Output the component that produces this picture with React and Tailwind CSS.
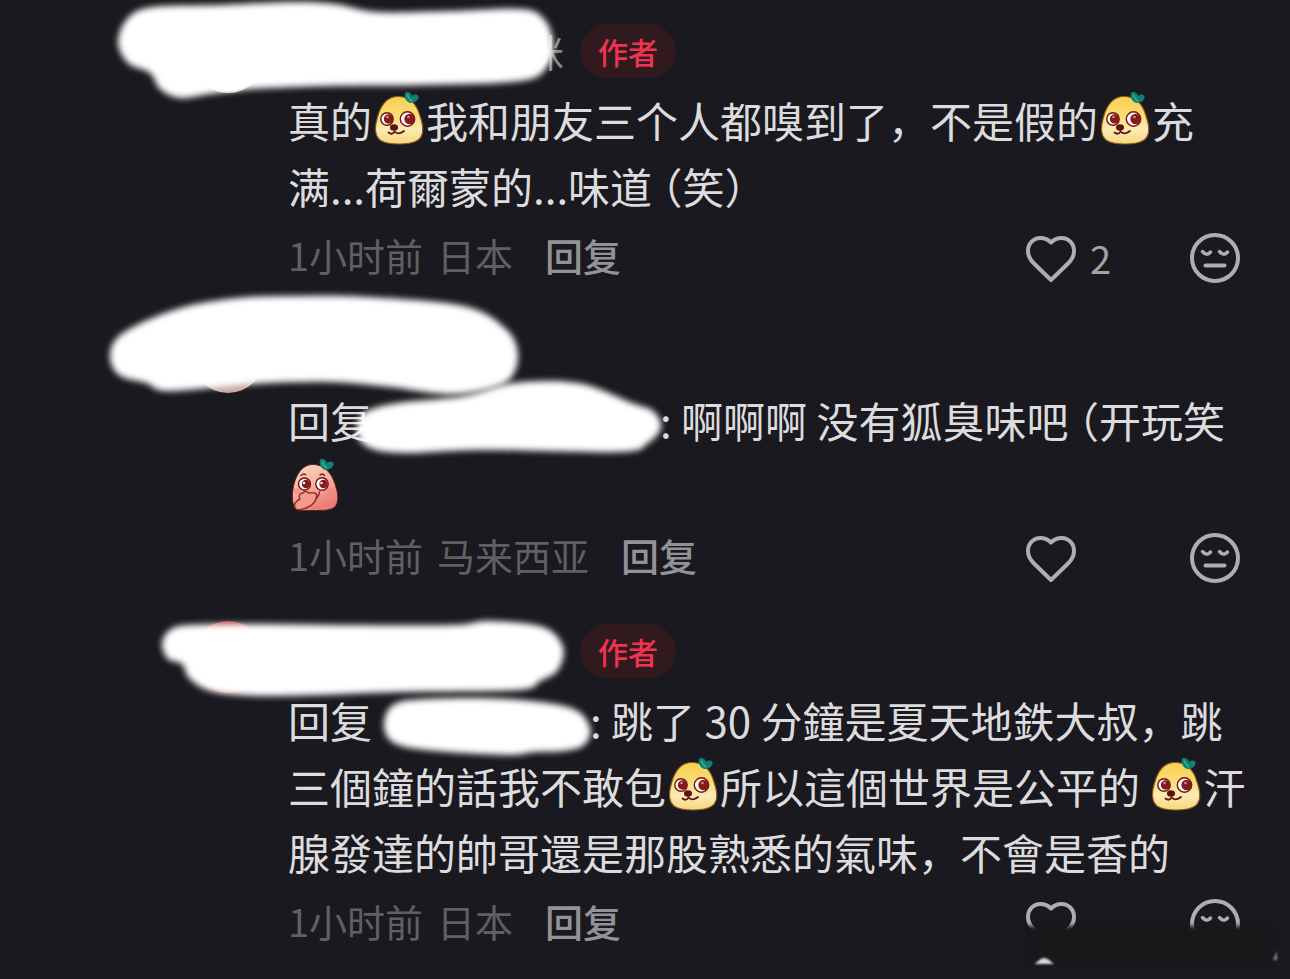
import { useState } from 'react'
import { clsx } from 'clsx'

// Closed smooth outline through a list of points
const smoothPath = (pts) => {
  const n = pts.length
  const at = (i) => pts[(i + n) % n]
  let d = `M${pts[0].join(' ')}`
  for (let i = 0; i < n; i++) {
    const [p0, p1, p2, p3] = [at(i - 1), at(i), at(i + 1), at(i + 2)]
    const c1 = [p1[0] + (p2[0] - p0[0]) / 6, p1[1] + (p2[1] - p0[1]) / 6]
    const c2 = [p2[0] - (p3[0] - p1[0]) / 6, p2[1] - (p3[1] - p1[1]) / 6]
    d += `C${c1.join(' ')} ${c2.join(' ')} ${p2.join(' ')}`
  }
  return `${d}Z`
}

function Scribble({ points }) {
  return (
    <svg
      aria-hidden="true"
      width="700"
      height="180"
      viewBox="0 0 700 180"
      className="pointer-events-none absolute top-0 left-0 overflow-visible"
    >
      {points.map((pts, i) => (
        <path key={i} d={smoothPath(pts)} fill="#fff" className="blur-[3px]" />
      ))}
    </svg>
  )
}

function HeartIcon() {
  return (
    <svg width="50" height="50" viewBox="0 -3 50 50" fill="none" stroke="currentColor" strokeWidth="4" strokeLinejoin="round">
      <path d="M25 6.5C22 3.5 18.5 2 14.5 2 7.5 2 2 7.5 2 15c0 5 2.2 8.7 5.5 12L25 44l17.5-17C45.8 23.7 48 20 48 15 48 7.5 42.5 2 35.5 2 31.5 2 28 3.5 25 6.5Z" />
    </svg>
  )
}

function DislikeIcon() {
  return (
    <svg width="50" height="50" viewBox="0 0 50 50" fill="none" stroke="currentColor" strokeWidth="4" strokeLinecap="round">
      <circle cx="25" cy="25" r="23" />
      <path d="M12.500 18.5q4.200 5 8 .5M29.500 18.5q4.200 5 8 .5" strokeWidth="3.500" />
      <path d="M15.500 32.500h19" />
    </svg>
  )
}

function Leaf() {
  return (
    <>
      <path d="M39 19c-5-2-6.500-7-4.500-11 3.500-.5 6 1 6.500 4 2-2 5-2 6.500 0 .5 4-3 7-8.500 7Z" fill="#12806e" />
      <path d="M36.500 10.500c.5 3 2 5 4.500 6.500" fill="none" stroke="#2fb49a" strokeWidth="1.500" />
    </>
  )
}

function DogeEmoji() {
  return (
    <svg role="img" aria-label="doge" width="54" height="54" viewBox="1 7 54 54" className="inline-block align-[-7px]">
      <defs>
        <linearGradient id="doge" x1="0" y1="0" x2="0" y2="1">
          <stop offset="0" stopColor="#f8cf52" />
          <stop offset="0.35" stopColor="#fadb70" />
          <stop offset="0.7" stopColor="#fbeab4" />
          <stop offset="1" stopColor="#f8d67c" />
        </linearGradient>
      </defs>
      <path
        d="M27 12.500C16 12.500 9.500 22 6.500 33 3.500 43 4 52 9 56c4 3 12 4 19 4s15-1 19-4c6-4 5.500-14 2-24C46 21 39 12.500 27 12.500Z"
        fill="url(#doge)"
        stroke="#8a5a1e"
        strokeWidth="1.200"
      />
      <Leaf />
      <circle cx="16" cy="35" r="6.200" fill="#fff" stroke="#6d1411" strokeWidth="1.400" />
      <circle cx="36.500" cy="35" r="7.200" fill="#fff" stroke="#6d1411" strokeWidth="1.400" />
      <circle cx="17.500" cy="35" r="4.700" fill="#861919" />
      <circle cx="38.500" cy="35" r="5.200" fill="#861919" />
      <circle cx="16.500" cy="33" r="1.300" fill="#d98a80" />
      <circle cx="37.500" cy="33" r="1.300" fill="#d98a80" />
      <ellipse cx="23" cy="43.500" rx="4" ry="3.200" fill="#5e120f" />
      <path d="M17.500 48.500c2.500 2 5 1.500 6-1 2 2.500 6 2.500 9.500-.5" fill="none" stroke="#5e120f" strokeWidth="1.800" strokeLinecap="round" />
    </svg>
  )
}

function ShyEmoji() {
  return (
    <svg role="img" aria-label="snicker" width="54" height="54" viewBox="3 2 54 54" className="inline-block align-[-7px]">
      <defs>
        <linearGradient id="peach" x1="0" y1="0" x2="0.4" y2="1">
          <stop offset="0" stopColor="#fbd9c4" />
          <stop offset="0.5" stopColor="#f9b5a5" />
          <stop offset="1" stopColor="#ec7f76" />
        </linearGradient>
      </defs>
      <path
        d="M27 9.500C17 10 11 20 8.500 31 6.500 41 7 50 11 54c4 2 11 1.500 17 1.500 9 0 17 0 21-3 5-4 4.500-13 1.500-22C47 18 39 9 27 9.500Z"
        fill="url(#peach)"
        stroke="#5f241f"
        strokeWidth="1"
      />
      <g transform="translate(1 -4)">
        <Leaf />
      </g>
      <ellipse cx="12" cy="36" rx="3.500" ry="3" fill="#f4847c" opacity="0.6" />
      <ellipse cx="46" cy="36" rx="4" ry="3" fill="#f4847c" opacity="0.6" />
      <path d="M16 20.500q2-2.500 4.500-1M35 20q2.500-2 4.500.5" fill="none" stroke="#7b2a22" strokeWidth="1.500" strokeLinecap="round" />
      <circle cx="19.500" cy="29" r="6" fill="#fff" stroke="#6d1411" strokeWidth="1.400" />
      <circle cx="37" cy="29" r="6.200" fill="#fff" stroke="#6d1411" strokeWidth="1.400" />
      <circle cx="21" cy="29" r="4.200" fill="#861919" />
      <circle cx="38.500" cy="29" r="4.200" fill="#861919" />
      <circle cx="19" cy="28" r="1.200" fill="#fff" />
      <circle cx="36.500" cy="28" r="1.200" fill="#fff" />
      <path d="M11 54c-3-3-1-8 4-10-2-3 0-6 3-6 1-2 4-2 6 0 4-1 8 0 8 3-1 5-4 9-9 11-4 2-9 4-12 2Z" fill="#f79a8b" stroke="#8f302a" strokeWidth="1.400" />
      <path d="M31 43c2-1 3-3 3.500-6" fill="none" stroke="#8a231d" strokeWidth="1.500" strokeLinecap="round" />
    </svg>
  )
}

// Half-width opening and closing brackets
function Paren({ children }) {
  return <span className="[font-feature-settings:'halt']">{children}</span>
}

function Comment({ name, isAuthor, avatarClass, place, likes, marks, children }) {
  const [liked, setLiked] = useState(false)

  return (
    <article className="relative flex gap-6 pl-48">
      <div className={clsx('-mt-1 size-[72px] shrink-0 rounded-full', avatarClass)} />
      <div className="min-w-0 flex-1">
        <header className="flex h-[54px] items-center gap-4 pb-0.5 leading-none">
          <span className="w-[276px] text-right text-[38px] text-[#88888d]">{name}</span>
          {isAuthor && (
            <span className="flex h-[54px] items-center rounded-full bg-[#301a1e] px-[18px] text-[30px] font-medium text-[#ef3350]">
              作者
            </span>
          )}
        </header>

        <div className="mt-2 text-[42px] leading-[66px] whitespace-pre text-[#dcdcde]">{children}</div>

        <footer className="mt-0.5 flex h-[73px] items-center pr-[50px] text-[38px] leading-none">
          <div className="flex gap-3.5 pb-1.5 text-[#5f5f64]">
            <span>1小时前</span>
            <span>{place}</span>
          </div>
          <button type="button" className="ml-8 pb-1.5 font-medium text-[#929297]">
            回复
          </button>
          <div className="ml-auto flex items-center text-[#adadb3]">
            <button
              type="button"
              aria-label="赞"
              aria-pressed={liked}
              onClick={() => setLiked(!liked)}
              className="flex w-[164px] items-center gap-3.5"
            >
              <HeartIcon />
              <span className="text-[#a3a3a3]">{likes}</span>
            </button>
            <button type="button" aria-label="不喜欢">
              <DislikeIcon />
            </button>
          </div>
        </footer>
      </div>
      <Scribble points={marks} />
    </article>
  )
}

const firstMarks = [
  [[118, 17], [128, -7], [153, -18], [220, -20], [291, -23], [335, -21], [378, -13], [450, -14], [521, -16], [544, -6], [553, 18], [547, 42], [521, 56], [425, 60], [330, 61], [253, 64], [210, 69], [180, 73], [160, 64], [150, 48], [128, 38]],
]

const secondMarks = [
  [[110, 30], [123, 8], [177, -16], [238, -27], [300, -29], [368, -28], [464, -19], [506, 4], [518, 30], [509, 55], [480, 66], [444, 69], [390, 62], [330, 57], [253, 59], [169, 66], [146, 58], [119, 50]],
  [[357, 108], [364, 88], [398, 78], [464, 71], [513, 58], [578, 58], [632, 78], [653, 86], [661, 102], [648, 118], [620, 127], [483, 125], [406, 128], [370, 123]],
]

const thirdMarks = [
  [[162, 19], [170, 5], [190, 0], [257, -1], [346, 0], [453, 0], [489, -4], [543, 2], [563, 22], [558, 45], [540, 56], [518, 65], [400, 67], [275, 71], [215, 67], [190, 54], [182, 39], [168, 34]],
  [[384, 102], [393, 80], [428, 74], [507, 74], [571, 83], [590, 103], [584, 120], [564, 126], [535, 127], [507, 130], [436, 126], [396, 119]],
]

// Smudge over the bottom right corner
function Smudge() {
  return (
    <svg
      aria-hidden="true"
      width="266"
      height="60"
      viewBox="0 0 266 60"
      className="pointer-events-none absolute right-0 bottom-0"
    >
      <rect x="2" y="7" width="250" height="40" fill="#18181b" className="blur-[2px]" />
      <path d="M10 45c3-1 6-6 10-6s7 4 10 6Z" fill="#d8d8d8" className="blur-[1px]" />
      <path d="M253 32v9h-4Z" fill="#8b8b8b" className="blur-[1px]" />
    </svg>
  )
}

export default function App() {
  return (
    <main
      lang="zh-CN"
      className="relative min-h-screen overflow-hidden bg-[#1a191f] pt-[25px] font-['Noto_Sans_CJK_SC',sans-serif]"
    >
      <div className="flex flex-col gap-[31px]">
        <Comment name="咪" isAuthor avatarClass="border-2 border-[#d9d5d2] bg-white" place="日本" likes={2} marks={firstMarks}>
          <p>
            真的
            <DogeEmoji />
            我和朋友三个人都嗅到了，不是假的
            <DogeEmoji />充
          </p>
          <p>
            满...荷爾蒙的...味道 <Paren>（笑）</Paren>
          </p>
        </Comment>

        <Comment avatarClass="bg-[#c7a79f]" place="马来西亚" marks={secondMarks}>
          <p>
            回复
            <span className="inline-block w-[288px]" />: 啊啊啊 没有狐臭味吧 <Paren>（</Paren>开玩笑
          </p>
          <p>
            <ShyEmoji />
          </p>
        </Comment>

        <Comment isAuthor avatarClass="bg-[#b5453f]" place="日本" marks={thirdMarks}>
          <p>
            回复
            <span className="inline-block w-[218px]" />: 跳了 30 分鐘是夏天地鉄大叔，跳
          </p>
          <p>
            三個鐘的話我不敢包
            <DogeEmoji />
            所以這個世界是公平的 <DogeEmoji />汗
          </p>
          <p>腺發達的帥哥還是那股熟悉的氣味，不會是香的</p>
        </Comment>
      </div>
      <Smudge />
    </main>
  )
}
